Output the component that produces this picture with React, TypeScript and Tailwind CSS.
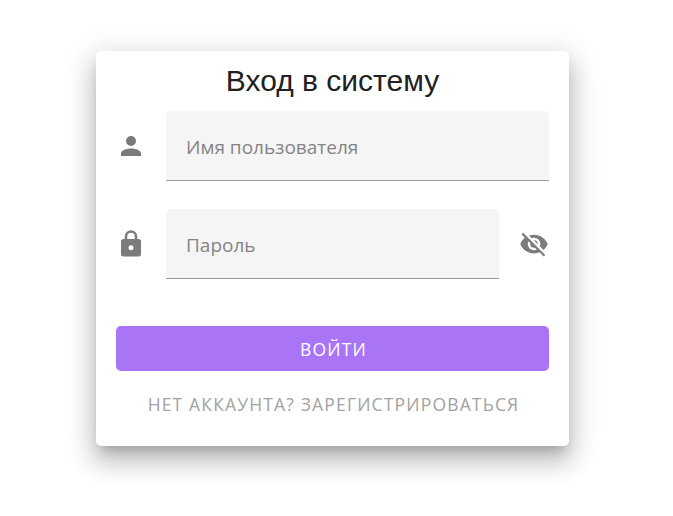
const ICONS = {
  account: "M12,4A4,4 0 0,1 16,8A4,4 0 0,1 12,12A4,4 0 0,1 8,8A4,4 0 0,1 12,4M12,14C16.42,14 20,15.79 20,18V20H4V18C4,15.79 7.58,14 12,14Z",
  lock: "M12,17A2,2 0 0,0 14,15C14,13.89 13.1,13 12,13A2,2 0 0,0 10,15A2,2 0 0,0 12,17M18,8A2,2 0 0,1 20,10V20A2,2 0 0,1 18,22H6A2,2 0 0,1 4,20V10C4,8.89 4.9,8 6,8H7V6A5,5 0 0,1 12,1A5,5 0 0,1 17,6V8H18M12,3A3,3 0 0,0 9,6V8H15V6A3,3 0 0,0 12,3Z",
  eyeOff: "M11.83,9L15,12.16C15,12.11 15,12.05 15,12A3,3 0 0,0 12,9C11.94,9 11.89,9 11.83,9M7.53,9.8L9.08,11.35C9.03,11.56 9,11.77 9,12A3,3 0 0,0 12,15C12.22,15 12.44,14.97 12.65,14.92L14.2,16.47C13.53,16.8 12.79,17 12,17A5,5 0 0,1 7,12C7,11.21 7.2,10.47 7.53,9.8M2,4.27L4.28,6.55L4.73,7C3.08,8.3 1.78,10 1,12C2.73,16.39 7,19.5 12,19.5C13.55,19.5 15.03,19.2 16.38,18.66L16.81,19.08L19.73,22L21,20.73L3.27,3M12,7A5,5 0 0,1 17,12C17,12.64 16.87,13.26 16.64,13.82L19.57,16.75C21.07,15.5 22.27,13.86 23,12C21.27,7.61 17,4.5 12,4.5C10.6,4.5 9.26,4.75 8,5.2L10.17,7.35C10.74,7.13 11.35,7 12,7Z",
};

function Icon({ name }: { name: keyof typeof ICONS }) {
  return (
    <svg viewBox="0 0 24 24" className="size-[30px] shrink-0 fill-[#7b7b7b]" aria-hidden="true">
      <path d={ICONS[name]} />
    </svg>
  );
}

function Field({ label }: { label: string }) {
  return (
    <div className="flex h-[70px] flex-1 items-center rounded-t-[5px] border-b border-[#9c9c9c] bg-[#f5f5f5] pl-5 pt-[3px] text-[19px] tracking-[0.01px] text-[#848484]">
      <span className="whitespace-nowrap">{label}</span>
    </div>
  );
}

export default function App() {
  return (
    <main className="h-[516px] overflow-hidden bg-white pl-24 pt-[51px] font-['Open_Sans',sans-serif]">
      <section className="flex h-[395px] w-[473px] flex-col rounded-[5px] bg-white px-5 shadow-[0_8.75px_11.25px_-5px_rgba(0,0,0,0.2),0_16.25px_23.75px_2.5px_rgba(0,0,0,0.14),0_6.25px_30px_5px_rgba(0,0,0,0.12)]">
        <h1 className="h-[60px] whitespace-nowrap text-center font-['Liberation_Sans',sans-serif] text-[30px] leading-[60px] text-[#212121]">Вход в систему</h1>
        <div className="flex items-center gap-5">
          <Icon name="account" />
          <Field label="Имя пользователя" />
        </div>
        <div className="mt-7 flex items-center">
          <Icon name="lock" />
          <div className="ml-5 flex flex-1"><Field label="Пароль" /></div>
          <div className="ml-5"><Icon name="eyeOff" /></div>
        </div>
        <button className="mt-[47px] h-[45px] shrink-0 rounded-[5px] bg-[#a974f6] pt-[2px] pl-[2px] text-[17.5px] tracking-[1.2px] text-white">ВОЙТИ</button>
        <button className="mt-[11px] h-[45px] shrink-0 whitespace-nowrap pl-[2px] text-[17.5px] tracking-[1.16px] text-[#a2a2a2]">НЕТ АККАУНТА? ЗАРЕГИСТРИРОВАТЬСЯ</button>
      </section>
    </main>
  );
}
